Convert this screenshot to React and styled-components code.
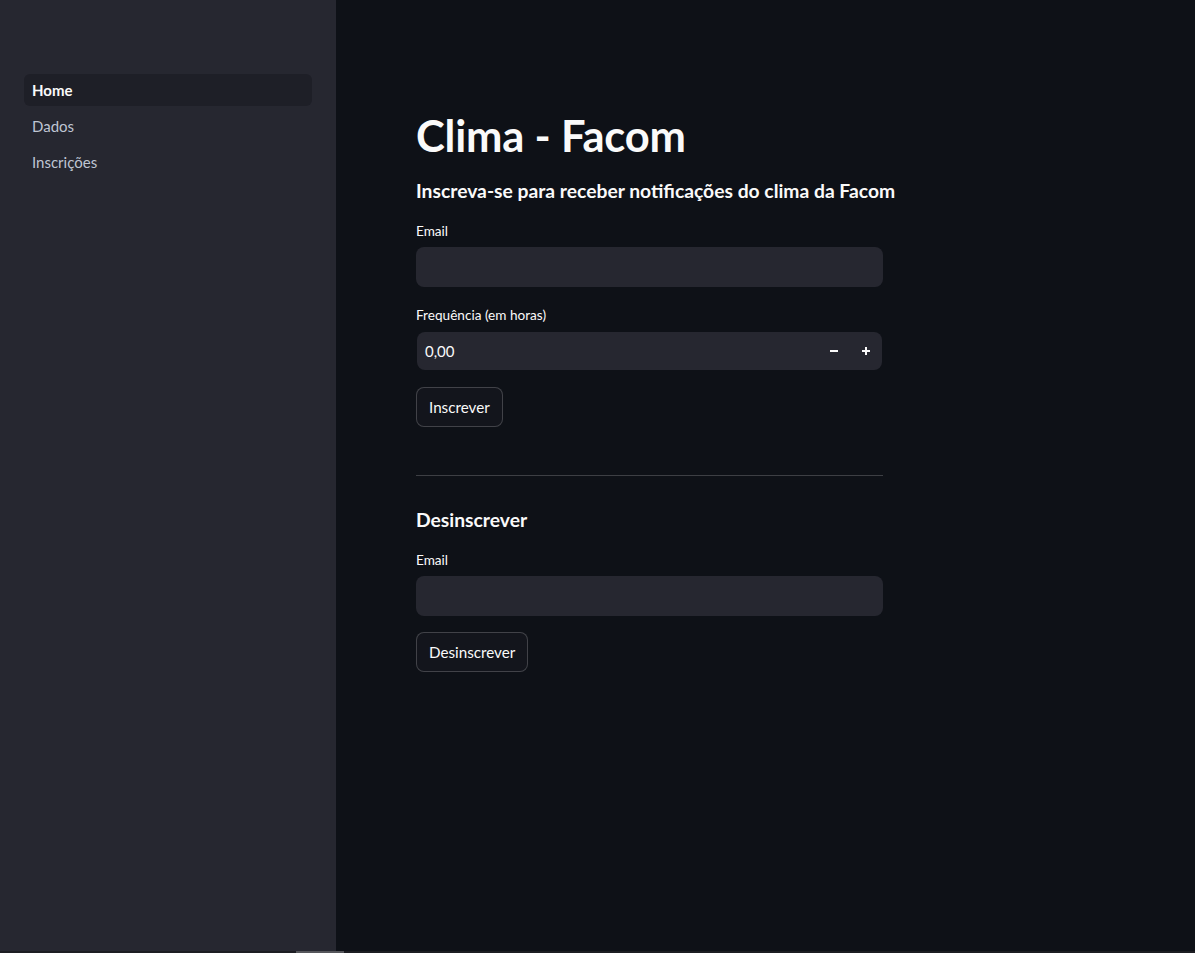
import React from "react";
import styled, { createGlobalStyle } from "styled-components";

const Global = createGlobalStyle`
  html, body { margin: 0; padding: 0; background: #0e1117; }
  body { font-family: Lato, "Noto Sans", sans-serif; color: #fafafa; overflow: hidden; }
  * { box-sizing: border-box; }
`;

const Page = styled.div`
  width: 1195px;
  height: 953px;
  display: flex;
  flex-direction: column;
`;

const Body = styled.div`
  flex: 1;
  display: flex;
  min-height: 0;
`;

const Sidebar = styled.aside`
  width: 336px;
  background: #262730;
  padding: 74px 24px 0 24px;
  display: flex;
  flex-direction: column;
  gap: 4px;
`;

const NavItem = styled.div`
  height: 32px;
  display: flex;
  align-items: center;
  padding-left: 8px;
  border-radius: 6px;
  font-size: 15px;
  background: ${(p) => (p.$active ? "#1e1f27" : "transparent")};
  color: ${(p) => (p.$active ? "#fafafa" : "#bfc5d3")};
  font-weight: ${(p) => (p.$active ? 700 : 400)};
`;

const Main = styled.main`
  flex: 1;
  background: #0e1117;
  padding: 108px 0 0 80px;
`;

const Column = styled.div`
  width: 467px;
  display: flex;
  flex-direction: column;
`;

const Title = styled.h1`
  margin: 0;
  font-size: 43.5px;
  font-weight: 700;
  line-height: 54px;
  letter-spacing: -0.2px;
`;

const Subheader = styled.h3`
  margin: ${(p) => p.$mt || "14px"} 0 0 0;
  font-size: 19.3px;
  font-weight: 700;
  line-height: 30px;
  white-space: nowrap;
`;

const Label = styled.div`
  margin-top: ${(p) => p.$mt || "20px"};
  font-size: 13.6px;
  line-height: 16px;
  height: 16px;
  color: #fafafa;
`;

const TextInput = styled.div`
  margin-top: 8px;
  height: 40px;
  background: #262730;
  border-radius: 8px;
`;

const NumberBox = styled.div`
  margin: 9px 1px 0 1px;
  height: 38px;
  background: #262730;
  border-radius: 8px;
  display: flex;
  align-items: center;
  padding: 0 0 0 8px;
`;

const NumberValue = styled.span`
  flex: 1;
  font-size: 15px;
`;

const StepButton = styled.div`
  width: 32px;
  height: 38px;
  display: flex;
  align-items: center;
  justify-content: center;
`;

const Button = styled.div`
  margin-top: ${(p) => p.$mt || "17px"};
  align-self: flex-start;
  height: 40px;
  padding: 0 12px;
  display: flex;
  align-items: center;
  border: 1px solid rgba(250, 250, 250, 0.2);
  border-radius: 8px;
  background: #13151c;
  font-size: 15.2px;
  color: #fafafa;
`;

const Divider = styled.hr`
  margin: 48px 0 0 0;
  border: none;
  border-top: 1px solid rgba(250, 250, 250, 0.2);
  height: 0;
`;

const ScrollTrack = styled.div`
  height: 2px;
  background: #1c1d22;
  display: flex;
`;

const ScrollThumb = styled.div`
  margin-left: 296px;
  width: 48px;
  background: #55565b;
`;

const Minus = () => (
  <svg width="10" height="10" viewBox="0 0 10 10">
    <rect x="1" y="4" width="8" height="2" fill="#fafafa" />
  </svg>
);

const Plus = () => (
  <svg width="10" height="10" viewBox="0 0 10 10">
    <rect x="1" y="4" width="8" height="2" fill="#fafafa" />
    <rect x="4" y="1" width="2" height="8" fill="#fafafa" />
  </svg>
);

export default function App() {
  return (
    <>
      <Global />
      <Page>
        <Body>
          <Sidebar>
            <NavItem $active>Home</NavItem>
            <NavItem>Dados</NavItem>
            <NavItem>Inscrições</NavItem>
          </Sidebar>
          <Main>
            <Column>
              <Title>Clima - Facom</Title>
              <Subheader>Inscreva-se para receber notificações do clima da Facom</Subheader>
              <Label $mt="17px">Email</Label>
              <TextInput />
              <Label>Frequência (em horas)</Label>
              <NumberBox>
                <NumberValue>0,00</NumberValue>
                <StepButton><Minus /></StepButton>
                <StepButton><Plus /></StepButton>
              </NumberBox>
              <Button>Inscrever</Button>
              <Divider />
              <Subheader $mt="29px">Desinscrever</Subheader>
              <Label $mt="17px">Email</Label>
              <TextInput />
              <Button $mt="16px">Desinscrever</Button>
            </Column>
          </Main>
        </Body>
        <ScrollTrack>
          <ScrollThumb />
        </ScrollTrack>
      </Page>
    </>
  );
}
